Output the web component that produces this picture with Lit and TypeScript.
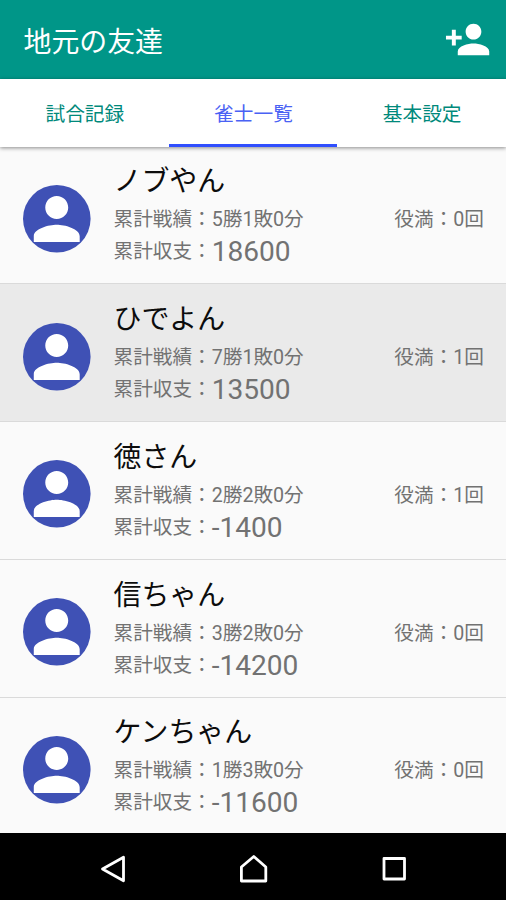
import { LitElement, html, css } from "lit";
import { customElement, property, state } from "lit/decorators.js";
import { classMap } from "lit/directives/class-map.js";

interface Player {
  name: string;
  record: string;
  balance: string;
  yakuman: number;
}

const PLAYERS: Player[] = [
  { name: "ノブやん", record: "5勝1敗0分", balance: "18600", yakuman: 0 },
  { name: "ひでよん", record: "7勝1敗0分", balance: "13500", yakuman: 1 },
  { name: "徳さん", record: "2勝2敗0分", balance: "-1400", yakuman: 1 },
  { name: "信ちゃん", record: "3勝2敗0分", balance: "-14200", yakuman: 0 },
  { name: "ケンちゃん", record: "1勝3敗0分", balance: "-11600", yakuman: 0 },
];

@customElement("player-row")
class PlayerRow extends LitElement {
  @property({ attribute: false }) player!: Player;

  static styles = css`
    :host {
      display: flex;
      box-sizing: border-box;
      height: 137.8px;
      padding: 0 22px 0 23px;
      border-bottom: 1.4px solid #dadada;
      color: #727272;
      font-size: 19.65px;
    }
    .avatar {
      flex: none;
      width: 67.6px;
      height: 67.6px;
      margin: 38.3px 22.9px 0 0;
      overflow: visible;
    }
    .info {
      flex: 1;
      display: flex;
      flex-direction: column;
      padding-top: 15.9px;
    }
    .name {
      height: 40px;
      line-height: 40px;
      font-size: 27.9px;
      color: #0c0c0c;
    }
    .line {
      display: flex;
      justify-content: space-between;
      height: 36px;
      line-height: 36px;
      white-space: nowrap;
    }
    .balance {
      display: flex;
      height: 33px;
      margin-top: -3px;
      line-height: 33px;
      white-space: nowrap;
    }
    .amount {
      font-size: 28.1px;
    }
  `;

  render() {
    const p = this.player;
    return html`
      <svg class="avatar" viewBox="0 0 67.6 67.6">
        <circle cx="33.8" cy="33.8" r="33.8" fill="#3f51b5" />
        <path
          transform="translate(-.7 -.5) scale(2.87)"
          fill="#fff"
          d="M12 12c2.21 0 4-1.79 4-4s-1.79-4-4-4-4 1.79-4 4 1.79 4 4 4zm0 2c-2.67 0-8 1.34-8 4v2h16v-2c0-2.66-5.33-4-8-4z"
        />
      </svg>
      <div class="info">
        <div class="name">${p.name}</div>
        <div class="line">
          <span>累計戦績：${p.record}</span>
          <span>役満：${p.yakuman}回</span>
        </div>
        <div class="balance"><span>累計収支：</span><span class="amount">${p.balance}</span></div>
      </div>
    `;
  }
}

@customElement("app-root")
class AppRoot extends LitElement {
  @state() private tab = 1;
  @state() private selected = 1;

  static styles = css`
    :host {
      display: flex;
      flex-direction: column;
      width: 506px;
      height: 900px;
      overflow: hidden;
      background: #fafafa;
      font-family: Roboto, "Noto Sans CJK JP", sans-serif;
    }
    .header {
      flex: none;
      display: flex;
      align-items: center;
      justify-content: space-between;
      box-sizing: border-box;
      height: 79px;
      padding: 0 15px 0 23.5px;
      background: #009688;
      color: #fff;
      font-size: 27.9px;
    }
    .add {
      width: 47.2px;
      height: 47.2px;
      margin-top: 1px;
    }
    .tabs {
      flex: none;
      display: grid;
      grid-template-columns: repeat(3, 1fr);
      height: 68px;
      background: #fff;
      box-shadow: 0 1px 4px rgba(0, 0, 0, 0.45);
      z-index: 1;
    }
    .tab {
      box-sizing: border-box;
      height: 68px;
      padding: 6px 0 0 1px;
      border-bottom: 3px solid transparent;
      line-height: 59px;
      text-align: center;
      font-size: 19.7px;
      color: #00897b;
    }
    .tab.active {
      color: #4a62f4;
      border-bottom-color: #304ffe;
    }
    .list {
      flex: 1;
      min-height: 0;
      overflow: hidden;
      margin-top: -0.6px;
    }
    .selected {
      background: #eaeaea;
    }
    .nav {
      flex: none;
      display: flex;
      align-items: center;
      justify-content: space-between;
      box-sizing: border-box;
      height: 66.6px;
      padding: 4px 98px 0 99px;
      background: #000;
    }
    .key {
      width: 28px;
      height: 30px;
      fill: none;
      stroke: #fff;
      stroke-width: 2.8;
      stroke-linejoin: round;
      overflow: visible;
    }
  `;

  render() {
    return html`
      <header class="header">
        <span>地元の友達</span>
        <svg class="add" viewBox="0 0 24 24" fill="#fff">
          <path
            d="M15 12c2.21 0 4-1.79 4-4s-1.79-4-4-4-4 1.79-4 4 1.79 4 4 4zm-9-2V7H4v3H1v2h3v3h2v-3h3v-2H6zm9 4c-2.67 0-8 1.34-8 4v2h16v-2c0-2.66-5.33-4-8-4z"
          />
        </svg>
      </header>
      <nav class="tabs">
        ${["試合記録", "雀士一覧", "基本設定"].map(
          (label, i) => html`<div
            class=${classMap({ tab: true, active: i === this.tab })}
            @click=${() => (this.tab = i)}
          >${label}</div>`
        )}
      </nav>
      <main class="list">
        ${PLAYERS.map(
          (p, i) => html`<player-row
            class=${classMap({ selected: i === this.selected })}
            .player=${p}
            @click=${() => (this.selected = i)}
          ></player-row>`
        )}
      </main>
      <footer class="nav">
        <svg class="key" viewBox="0 0 28 30"><path d="M3.5 15 24.5 3.2V26.8Z" /></svg>
        <svg class="key" viewBox="0 0 28 30"><path d="M1.4 27V13L13.8 2.5 25.8 13V27Z" /></svg>
        <svg class="key" viewBox="0 0 28 30"><path d="M4 4.5H24.5V25H4Z" /></svg>
      </footer>
    `;
  }
}
